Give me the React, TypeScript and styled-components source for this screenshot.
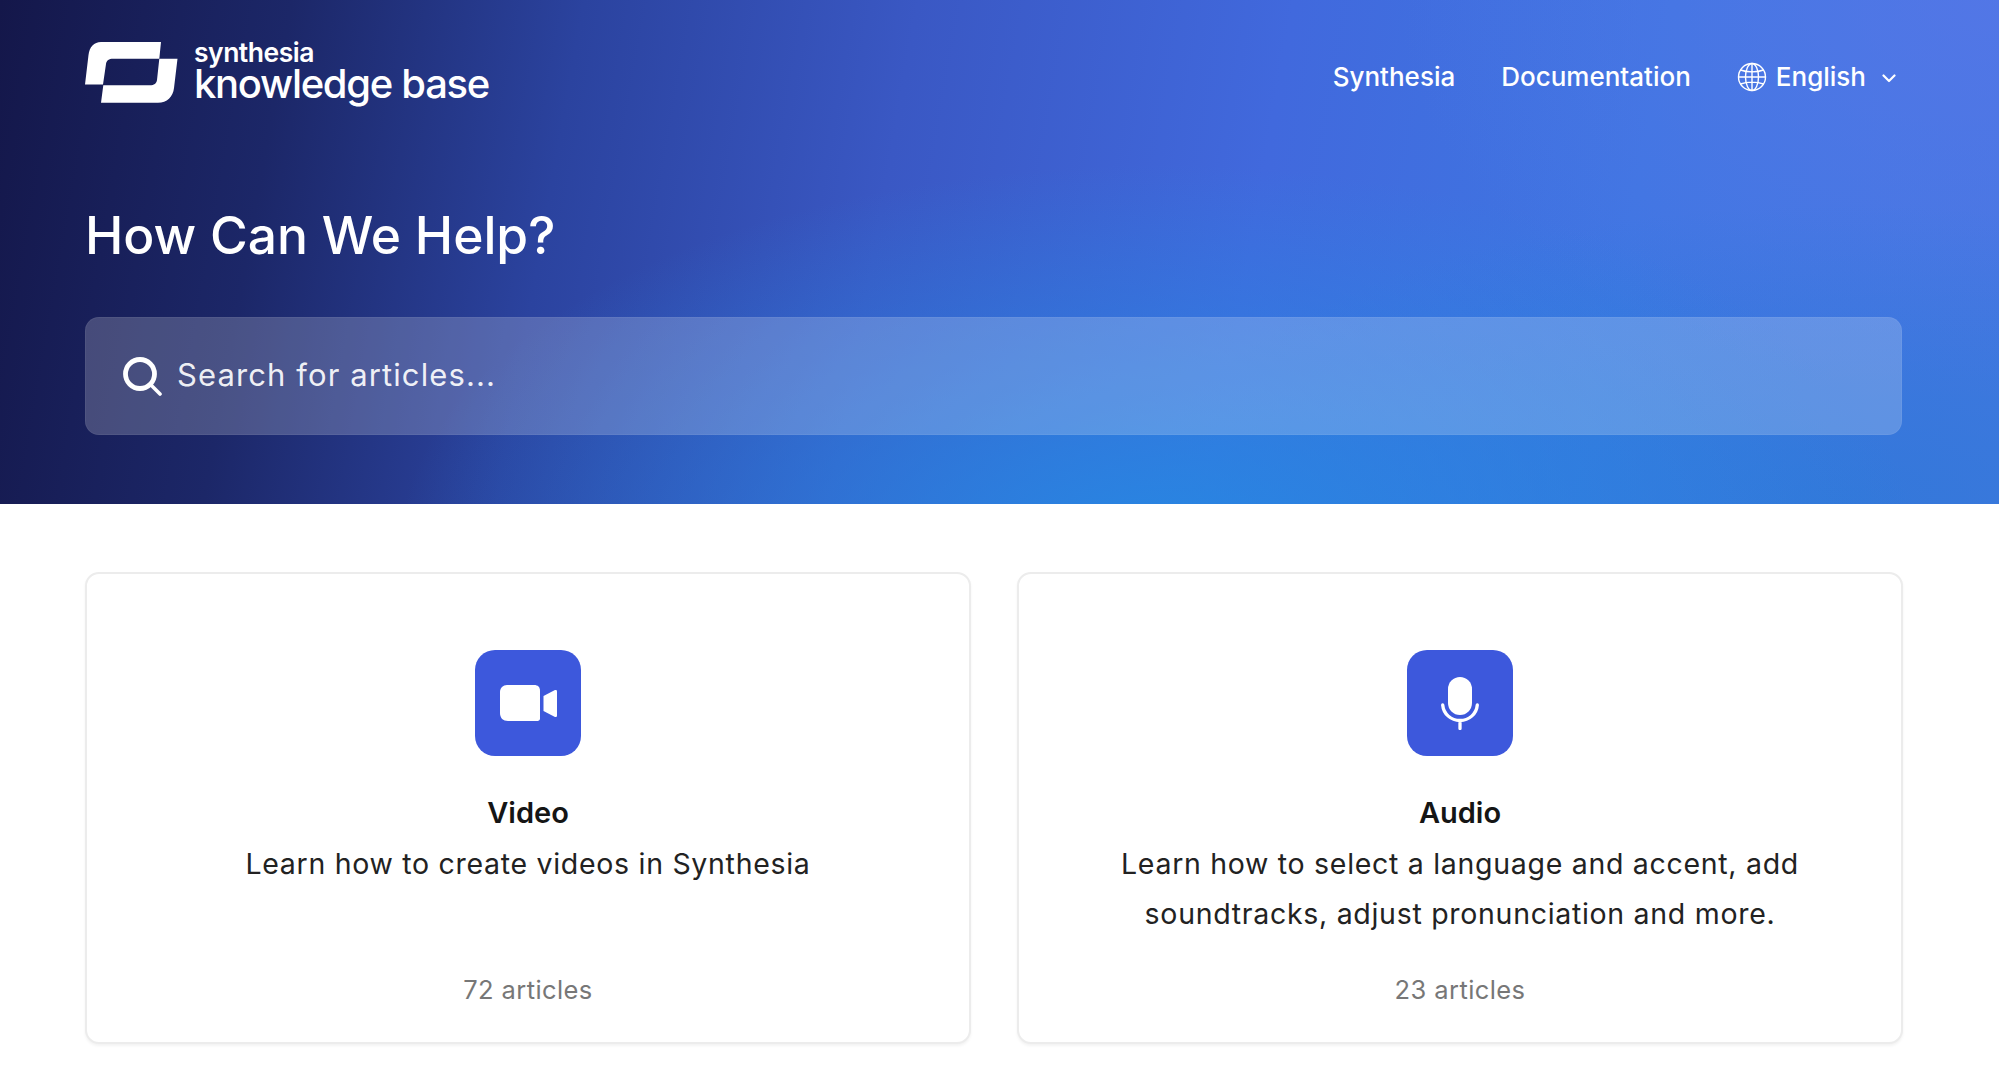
import styled, { createGlobalStyle } from 'styled-components';

const GlobalStyle = createGlobalStyle`
  html, body {
    margin: 0;
    height: 100%;
    background: #fff;
    overflow: hidden;
    font-family: Inter, "Liberation Sans", sans-serif;
  }
  * { box-sizing: border-box; }
`;

const categories = [
  {
    title: 'Video',
    description: 'Learn how to create videos in Synthesia',
    count: '72 articles',
    icon: 'video',
  },
  {
    title: 'Audio',
    description:
      'Learn how to select a language and accent, add soundtracks, adjust pronunciation and more.',
    count: '23 articles',
    icon: 'audio',
  },
];

function LogoMark() {
  return (
    <svg width="93" height="61" viewBox="0 0 93 61" fill="#fff">
      <path d="M16 0H76L74.300 16.700H28C24 16.700 21.500 18.500 21 22L18 42.500H0L3.500 13C4.500 5 9 0 16 0Z" />
      <path d="M74.300 16.700H92.500L89 46C88 55 82 60.700 73 60.700H16L18.300 43.300H65C69 43.300 71.500 41.500 72 38Z" />
    </svg>
  );
}

function GlobeIcon() {
  return (
    <svg width="30" height="30" viewBox="0 0 30 30" fill="none" stroke="#fff" strokeWidth="1.400">
      <circle cx="15" cy="15" r="13.500" />
      <ellipse cx="15" cy="15" rx="6.500" ry="13.500" />
      <path d="M15 1.500V28.500M1.500 15H28.500M3.500 8C10 10.500 20 10.500 26.500 8M3.500 22C10 19.500 20 19.500 26.500 22" />
    </svg>
  );
}

function Chevron() {
  return (
    <svg width="14" height="9" viewBox="0 0 14 9" fill="none" stroke="#fff" strokeWidth="2.200" strokeLinecap="round" strokeLinejoin="round">
      <path d="M1.500 1.500L7 7L12.500 1.500" />
    </svg>
  );
}

function SearchIcon() {
  return (
    <svg width="39" height="39" viewBox="0 0 39 39" fill="none" stroke="#fff" strokeLinecap="round">
      <circle cx="17" cy="17" r="14.500" strokeWidth="4.800" />
      <path d="M28 28L37 37" strokeWidth="3.600" />
    </svg>
  );
}

function VideoIcon() {
  return (
    <svg width="57" height="36" viewBox="0 0 57 36" fill="#fff">
      <path d="M7 0H34C38 0 40 2 40 6V33.500C40 35 39 36 37.500 36H8C3 36 0 33 0 28V7C0 3 3 0 7 0Z" />
      <path d="M43.500 11L54.500 5.200C55.700 4.700 57 5 57 6.500V30.500C57 32 55.700 32.300 54.500 31.800L43.500 26Z" />
    </svg>
  );
}

function MicIcon() {
  return (
    <svg width="38" height="53" viewBox="0 0 38 53" fill="none">
      <rect x="7" y="0" width="24" height="38" rx="12" fill="#fff" />
      <path
        d="M1.700 28C2.500 37 10 43.500 19 43.500C28 43.500 35.500 37 36.300 28M19 43.500V51.500"
        stroke="#fff"
        strokeWidth="3.300"
        strokeLinecap="round"
      />
    </svg>
  );
}

export default function App() {
  return (
    <>
      <GlobalStyle />
      <Hero>
        <TopBar>
          <Brand>
            <LogoMark />
            <BrandText>
              <BrandSmall>synthesia</BrandSmall>
              <BrandLarge>knowledge base</BrandLarge>
            </BrandText>
          </Brand>
          <Nav>
            <NavLink>Synthesia</NavLink>
            <NavLink>Documentation</NavLink>
            <LanguagePicker>
              <GlobeIcon />
              <span>English</span>
              <Chevron />
            </LanguagePicker>
          </Nav>
        </TopBar>
        <Heading>How Can We Help?</Heading>
        <SearchBox>
          <SearchIcon />
          <SearchText>Search for articles...</SearchText>
        </SearchBox>
      </Hero>
      <Cards>
        {categories.map((category) => (
          <Card key={category.title}>
            <IconTile>{category.icon === 'video' ? <VideoIcon /> : <MicIcon />}</IconTile>
            <CardTitle>{category.title}</CardTitle>
            <CardDescription>{category.description}</CardDescription>
            <CardCount>{category.count}</CardCount>
          </Card>
        ))}
      </Cards>
    </>
  );
}

const Hero = styled.header`
  height: 504px;
  padding: 42px 97px 0 85px;
  color: #fff;
  background:
    radial-gradient(ellipse 760px 380px at 58% 108%, rgba(38, 136, 226, 0.95), rgba(38, 136, 226, 0) 100%),
    radial-gradient(ellipse 700px 300px at 92% 100%, rgba(44, 120, 214, 0.7), rgba(44, 120, 214, 0) 100%),
    radial-gradient(ellipse 600px 400px at 100% 0%, rgba(88, 118, 232, 0.7), rgba(88, 118, 232, 0) 100%),
    linear-gradient(100deg, #14174a 0%, #1c2768 14%, #2b439f 28%, #3a58c4 44%, #4169dd 62%, #3f76e2 80%, #4678e2 100%);
`;

const TopBar = styled.div`
  display: flex;
  justify-content: space-between;
  align-items: flex-start;
`;

const Brand = styled.div`
  display: flex;
  align-items: flex-start;
  gap: 16px;
`;

const BrandText = styled.div`
  display: flex;
  flex-direction: column;
  margin-top: -4px;
`;

const BrandSmall = styled.span`
  font-size: 26.500px;
  line-height: 28px;
  font-weight: 600;
  letter-spacing: -0.5px;
`;

const BrandLarge = styled.span`
  margin-top: 2px;
  font-size: 40px;
  line-height: 32px;
  font-weight: 500;
  letter-spacing: -1.300px;
`;

const Nav = styled.nav`
  display: flex;
  align-items: center;
  gap: 46px;
  margin-top: 17px;
`;

const NavLink = styled.a`
  font-size: 26px;
  line-height: 36px;
  font-weight: 500;
`;

const LanguagePicker = styled.div`
  display: flex;
  align-items: center;
  gap: 9px;
  margin-right: 6px;
  font-size: 26px;
  line-height: 36px;
  font-weight: 500;

  svg:last-child {
    margin-left: 7px;
    margin-top: 3px;
  }
`;

const Heading = styled.h1`
  margin: 100px 0 0;
  font-size: 51.500px;
  line-height: 64px;
  font-weight: 500;
`;

const SearchBox = styled.div`
  display: flex;
  align-items: center;
  gap: 15px;
  height: 118px;
  margin-top: 50px;
  padding-left: 38px;
  border-radius: 14px;
  background: rgba(255, 255, 255, 0.2);
  box-shadow: inset 0 0 0 1px rgba(255, 255, 255, 0.05);
`;

const SearchText = styled.span`
  margin-top: -4px;
  font-size: 31px;
  letter-spacing: 1.100px;
  font-weight: 400;
  color: rgba(255, 255, 255, 0.92);
`;

const Cards = styled.main`
  display: grid;
  grid-template-columns: 886px 886px;
  gap: 46px;
  padding: 68px 0 0 85px;
`;

const Card = styled.article`
  position: relative;
  display: flex;
  flex-direction: column;
  align-items: center;
  height: 472px;
  padding: 76px 90px 0;
  border: 2px solid #ececec;
  border-radius: 14px;
  background: #fff;
  box-shadow: 0 2px 3px rgba(0, 0, 0, 0.05);
`;

const IconTile = styled.div`
  display: flex;
  align-items: center;
  justify-content: center;
  width: 106px;
  height: 106px;
  border-radius: 20px;
  background: #3d58dc;
`;

const CardTitle = styled.h2`
  margin: 37px 0 0;
  font-size: 29px;
  line-height: 40px;
  font-weight: 600;
  color: #151515;
`;

const CardDescription = styled.p`
  margin: 6px 0 0;
  font-size: 28.500px;
  line-height: 49.500px;
  font-weight: 400;
  letter-spacing: 0.7px;
  text-align: center;
  color: #222;
`;

const CardCount = styled.span`
  position: absolute;
  bottom: 34px;
  font-size: 25.500px;
  line-height: 36px;
  letter-spacing: 0.4px;
  color: #777;
`;
